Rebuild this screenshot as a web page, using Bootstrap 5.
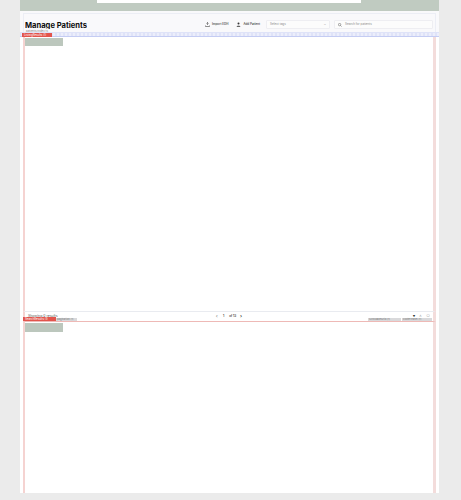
<!DOCTYPE html>
<html lang="en"><head><meta charset="utf-8"><title>Manage Patients</title>
<link href="https://cdn.jsdelivr.net/npm/bootstrap@5.3.0/dist/css/bootstrap.min.css" rel="stylesheet">
<style>
html,body{height:500px;overflow:hidden}
body{background:#ebebeb;font-family:Inter,"Liberation Sans",sans-serif;color:#111}
.shell{width:419px;height:493px;margin-left:20px;background:#fff;display:flex;flex-direction:column;overflow:hidden}
.topband{height:11px;flex:none;background:#c0cbc1;display:flex;justify-content:center}
.topsheet{width:264px;height:3px;background:#fff;margin-left:-1px}
.headzone{height:21px;flex:none;background:#f9f9fb;padding:2px 3px 0}
.headrow{height:19px;border-top:1px solid #eceef5;border-left:1px solid #eceef5;border-right:1px solid #eceef5;display:flex;align-items:center;padding:0 2px 0 0;gap:6px;position:relative}
.pagetitle{font-size:7.6px;font-weight:700;line-height:9px;height:8px;overflow:hidden;margin:3px auto 0 1px;color:#0c0c0c;white-space:nowrap}
.minibtn{font-size:3px;font-weight:500;color:#333;display:flex;align-items:center;gap:2px;white-space:nowrap;padding:0 1px;margin-top:3px}
.minibtn svg{width:5px;height:5px;flex:none}
.minibtn.addone{margin-right:-1px}
.tagbox,.findbox{height:9px;margin-top:3px;background:#fcfcfc;border:1px solid #eeeef2;border-radius:1px;font-size:3px;color:#8b8b8b;display:flex;align-items:center;padding:0 3px}
.tagbox{width:64px;justify-content:space-between;margin-right:-2px}
.findbox{width:99px;gap:3px}
.findbox svg{width:4px;height:4px}
.crumb{position:absolute;left:2px;bottom:-1px;font-size:2.800px;line-height:3px;color:#888}
.guide{height:5px;flex:none;margin:0 -1px;background:repeating-linear-gradient(90deg,#dfe3f8 0 2px,#eceefb 2px 4px);border-top:1px solid #dfe3f8;border-bottom:1px solid #c4ccf3;position:relative}
.redtag{position:absolute;background:#e2544c;color:#fff;font-size:2.800px;line-height:4px;height:4px;padding:0 2px;white-space:nowrap}
.guide .redtag{left:3px;top:0;width:30px}
.panel{margin:0 3px;border-left:2px solid #f5d3d1;border-right:3px solid #f3dcdb;background:#fff;position:relative}
.panel-one{height:274px;flex:none}
.panel-two{flex:1 1 auto;min-height:0;border-top:1px solid #eeb9b6}
.ghost{width:38px;height:8px;background:#bcc7bd;margin:1px 0 0}
.panel-two .ghost{height:9px}
.footrow{height:10px;flex:none;margin:0 3px;border-left:2px solid #f5d3d1;border-right:3px solid #f3dcdb;border-top:1px solid #e9ebf0;position:relative;display:grid;grid-template-columns:1fr auto 1fr;align-items:start}
.shown{font-size:3.500px;line-height:4px;color:#555;padding:2px 0 0 3px}
.pager{display:flex;align-items:center;gap:4px;font-size:3px;font-weight:600;line-height:5px;margin-top:2px;color:#333}
.pager .dim{color:#999;font-size:5px}
.pager .arrow{font-size:5px}
.pager .cur{padding:0 1px;line-height:3px}
.tools{display:flex;justify-content:flex-end;gap:4px;padding:2px 3px 0 0;font-size:4px;line-height:4px;color:#aaa}
.tools b{color:#333}
.redtag.low{left:-2px;bottom:0;width:33px}
.graytag{position:absolute;bottom:0;height:3px;background:#d9d9db;color:#777;font-size:2.600px;line-height:3px;padding:0 1px;white-space:nowrap}
.g1{left:31px;width:21px}.g2{right:32px;width:33px}.g3{right:1px;width:30px}
</style></head><body>
<div class="shell">
 <div class="topband"><div class="topsheet"></div></div>
 <div class="headzone"><div class="headrow">
  <div class="pagetitle">Manage Patients</div>
  <div class="minibtn"><svg viewBox="0 0 10 10" fill="none" stroke="#444" stroke-width="1.2"><path d="M5 1v5M3 3l2-2 2 2M1 7v2h8V7"/></svg>Import EDH</div>
  <div class="minibtn addone"><svg viewBox="0 0 10 10" fill="#333"><circle cx="5" cy="3" r="2"/><path d="M1 9.500c0-3 8-3 8 0z"/></svg>Add Patient</div>
  <div class="tagbox"><span>Select tags</span><span>⌄</span></div>
  <div class="findbox"><svg viewBox="0 0 10 10" fill="none" stroke="#555" stroke-width="1.300"><circle cx="4" cy="4" r="3"/><path d="M6.500 6.500 9 9"/></svg>Search for patients</div>
  <div class="crumb">patients/index.ts</div>
 </div></div>
 <div class="guide"><span class="redtag">ListingResults (1)</span></div>
 <div class="panel panel-one"><div class="ghost"></div></div>
 <div class="footrow">
  <div class="shown">Showing 0 results</div>
  <div class="pager"><span class="dim">‹</span><span class="cur">1</span><span>of 13</span><span class="arrow">›</span></div>
  <div class="tools"><b>▾</b><span>∧</span><span>○</span></div>
  <span class="redtag low">SearchResults (1)</span><span class="graytag g1">pagination (1)</span><span class="graytag g2">ScrollableGrid (1)</span><span class="graytag g3">FooterPanel (1)</span>
 </div>
 <div class="panel panel-two"><div class="ghost"></div></div>
</div>
<script src="https://cdn.jsdelivr.net/npm/bootstrap@5.3.0/dist/js/bootstrap.bundle.min.js"></script>
</body></html>
